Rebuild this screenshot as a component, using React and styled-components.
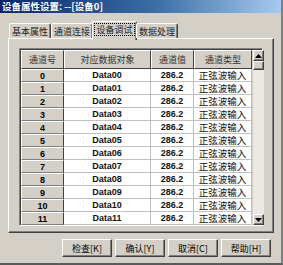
import React from 'react'
import styled, { createGlobalStyle } from 'styled-components'

const GlobalStyle = createGlobalStyle`
  html, body {
    margin: 0;
    padding: 0;
    background: #d4d0c8;
  }
  * { box-sizing: border-box; }
`

const rows = Array.from({ length: 12 }, (_, i) => ({
  id: i,
  name: 'Data' + String(i).padStart(2, '0'),
  value: '286.2',
  type: '正弦波输入',
}))

const tabs = ['基本属性', '通道连接', '设备调试', '数据处理']

export default function App() {
  return (
    <>
      <GlobalStyle />
      <Window>
        <TitleBar>设备属性设置: --[设备0]</TitleBar>
        <Body>
          <TabRow>
            {tabs.map((t, i) => (
              <Tab key={t} $active={i === 2}>
                <TabLabel $active={i === 2}>{t}</TabLabel>
              </Tab>
            ))}
          </TabRow>
          <Panel>
            <TableFrame>
              <Grid>
                <HeadCell>通道号</HeadCell>
                <HeadCell>对应数据对象</HeadCell>
                <HeadCell>通道值</HeadCell>
                <HeadCell>通道类型</HeadCell>
                {rows.map((r) => (
                  <React.Fragment key={r.id}>
                    <RowHead>{r.id}</RowHead>
                    <Cell $bold>{r.name}</Cell>
                    <Cell $bold>{r.value}</Cell>
                    <Cell>{r.type}</Cell>
                  </React.Fragment>
                ))}
              </Grid>
              <ScrollBar>
                <ScrollBtn>
                  <svg width="7" height="4" viewBox="0 0 7 4"><path d="M3.5 0 L7 4 L0 4 Z" fill="#000" /></svg>
                </ScrollBtn>
                <Thumb />
                <Track />
                <ScrollBtn>
                  <svg width="7" height="4" viewBox="0 0 7 4"><path d="M0 0 L7 0 L3.5 4 Z" fill="#000" /></svg>
                </ScrollBtn>
              </ScrollBar>
            </TableFrame>
          </Panel>
          <ButtonRow>
            <Button>检查[K]</Button>
            <Button>确认[Y]</Button>
            <Button>取消[C]</Button>
            <Button>帮助[H]</Button>
          </ButtonRow>
        </Body>
      </Window>
    </>
  )
}

const Window = styled.div`
  width: 283px;
  height: 265px;
  background: #d4d0c8;
  display: flex;
  flex-direction: column;
  border-right: 2px solid #808080;
  border-bottom: 2px solid #5a5a5a;
  font-family: "Noto Sans CJK SC", "Liberation Sans", sans-serif;
  color: #000;
`

const TitleBar = styled.div`
  height: 13px;
  line-height: 13px;
  padding-left: 2px;
  background: linear-gradient(to right, #0a246a 0%, #3a6ea5 55%, #a6caf0 100%);
  color: #fff;
  font-size: 9.5px;
  font-weight: 700;
  white-space: nowrap;
  overflow: hidden;
`

const Body = styled.div`
  flex: 1;
  padding: 8px 0 0 8px;
  display: flex;
  flex-direction: column;
`

const TabRow = styled.div`
  display: flex;
  align-items: flex-end;
  height: 17px;
  padding-left: 1px;
  position: relative;
  z-index: 1;
`

const Tab = styled.div`
  height: ${(p) => (p.$active ? '19px' : '15px')};
  margin: ${(p) => (p.$active ? '0 -1px -2px -1px' : '0')};
  width: ${(p) => (p.$active ? '45px' : '42px')};
  display: flex;
  align-items: flex-start;
  justify-content: center;
  padding-top: 2px;
  background: #d4d0c8;
  border-top: 1px solid #fff;
  border-left: 1px solid #fff;
  border-right: 1px solid #404040;
  box-shadow: inset -1px 0 0 #808080;
  border-radius: 2px 2px 0 0;
  font-size: 9px;
  color: #222;
  white-space: nowrap;
`

const TabLabel = styled.span`
  line-height: 11px;
  padding: 0 1px;
  outline: ${(p) => (p.$active ? '1px dotted #000' : 'none')};
`

const Panel = styled.div`
  width: 266px;
  height: 195px;
  border-top: 1px solid #fff;
  border-left: 1px solid #fff;
  border-right: 1px solid #404040;
  border-bottom: 1px solid #404040;
  box-shadow: inset -1px -1px 0 #808080;
  padding: 9px 0 0 10px;
`

const TableFrame = styled.div`
  width: 244px;
  height: 178px;
  display: flex;
  border-top: 1px solid #808080;
  border-left: 1px solid #808080;
  border-right: 1px solid #fff;
  border-bottom: 1px solid #fff;
  box-shadow: inset 1px 1px 0 #404040;
  padding: 1px 0 0 1px;
  background: #d4d0c8;
`

const Grid = styled.div`
  display: grid;
  grid-template-columns: 43px 87px 43px 58px;
  grid-template-rows: 19px repeat(12, 13px);
  background: #fff;
  align-self: flex-start;
`

const HeadCell = styled.div`
  background: #d4d0c8;
  border-top: 1px solid #fff;
  border-left: 1px solid #fff;
  border-right: 1px solid #404040;
  border-bottom: 1px solid #404040;
  display: flex;
  align-items: center;
  justify-content: center;
  font-size: 9px;
  color: #333;
`

const RowHead = styled.div`
  background: #d4d0c8;
  border-top: 1px solid #fff;
  border-left: 1px solid #fff;
  border-right: 1px solid #404040;
  border-bottom: 1px solid #808080;
  display: flex;
  align-items: center;
  justify-content: center;
  font-family: "Liberation Sans", sans-serif;
  font-weight: 700;
  font-size: 9px;
`

const Cell = styled.div`
  background: #fff;
  border-right: 1px solid #c0c0c0;
  border-bottom: 1px solid #c0c0c0;
  display: flex;
  align-items: center;
  justify-content: center;
  font-family: ${(p) => (p.$bold ? '"Liberation Sans", sans-serif' : '"Noto Sans CJK SC", sans-serif')};
  font-weight: ${(p) => (p.$bold ? 700 : 400)};
  font-size: ${(p) => (p.$bold ? '9px' : '9.5px')};
  color: #111;
  white-space: nowrap;
`

const ScrollBar = styled.div`
  width: 11px;
  margin-left: 1px;
  height: 175px;
  display: flex;
  flex-direction: column;
`

const ScrollBtn = styled.div`
  width: 11px;
  height: 11px;
  background: #d4d0c8;
  border-top: 1px solid #fff;
  border-left: 1px solid #fff;
  border-right: 1px solid #404040;
  border-bottom: 1px solid #404040;
  box-shadow: inset -1px -1px 0 #808080;
  display: flex;
  align-items: center;
  justify-content: center;
`

const Thumb = styled(ScrollBtn)`
  height: 9px;
`

const Track = styled.div`
  flex: 1;
  background: #ebe9e4;
`

const ButtonRow = styled.div`
  display: flex;
  justify-content: flex-end;
  gap: 3px;
  width: 266px;
  padding-right: 3px;
  margin-top: 6px;
`

const Button = styled.div`
  width: 50px;
  height: 18px;
  background: #d4d0c8;
  border-top: 1px solid #fff;
  border-left: 1px solid #fff;
  border-right: 1px solid #404040;
  border-bottom: 1px solid #404040;
  box-shadow: inset -1px -1px 0 #808080;
  display: flex;
  align-items: center;
  justify-content: center;
  font-size: 9px;
  white-space: nowrap;
`
